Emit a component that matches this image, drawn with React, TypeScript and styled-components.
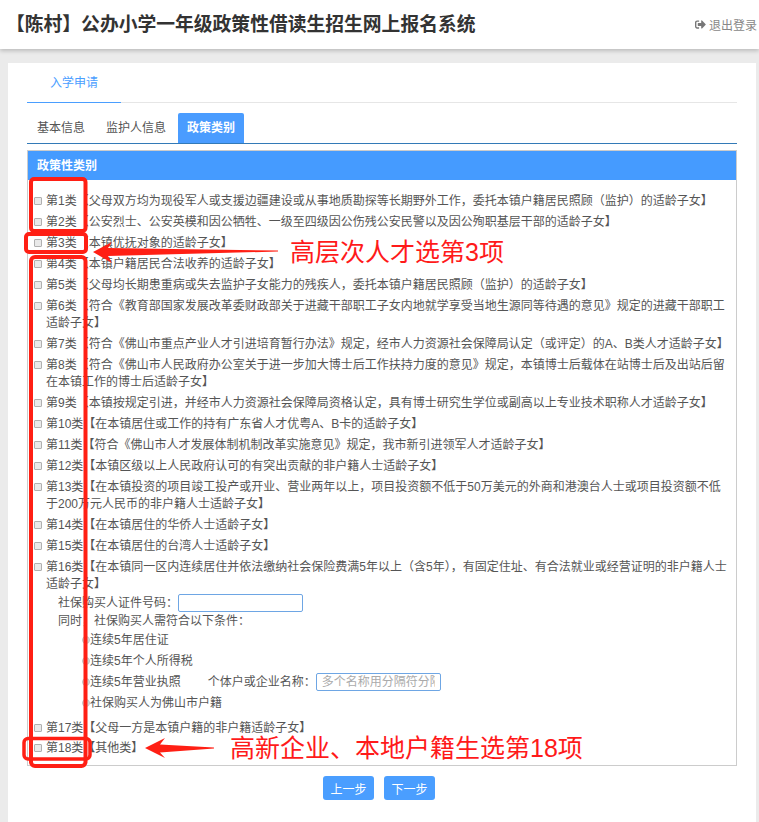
import React from "react";
import styled, { createGlobalStyle } from "styled-components";
import { FaSignOutAlt } from "react-icons/fa";

const Global = createGlobalStyle`
  html, body { margin: 0; padding: 0; background: #ebebeb; }
  body { font-family: "Liberation Sans", "Noto Sans CJK SC", sans-serif; font-size: 12px; color: #555; }
  * { box-sizing: border-box; }
`;
const Page = styled.div`
  position: relative;
  width: 759px;
  height: 822px;
  overflow: hidden;
`;
const Header = styled.header`
  height: 49px;
  background: #fff;
  box-shadow: 0 2px 4px rgba(0, 0, 0, 0.2);
  display: flex;
  align-items: center;
  justify-content: space-between;
  padding: 0 2px 0 6px;
`;
const Title = styled.h1`
  margin: 0;
  font-size: 18.8px;
  font-weight: 700;
  color: #333;
  line-height: 49px;
`;
const Logout = styled.a`
  display: flex;
  align-items: center;
  gap: 3px;
  color: #888;
  font-size: 12px;
  margin-bottom: 1px;
  svg { color: #777; }
`;
const Main = styled.main`
  padding: 14px 3px 0 8px;
`;
const Card = styled.section`
  background: #fff;
  height: 759px;
  padding: 0 19px;
`;
const TopTabs = styled.div`
  height: 40px;
  border-bottom: 1px solid #e6e6e6;
  display: flex;
`;
const TopTab = styled.div`
  width: 94px;
  height: 40px;
  padding-left: 23px;
  line-height: 41px;
  color: #4a9eff;
  border-bottom: 1px solid #4a9eff;
`;
const SubTabs = styled.div`
  margin-top: 10px;
  height: 31px;
  border-bottom: 1px solid #337ab7;
  display: flex;
`;
const SubTab = styled.div<{ $active?: boolean }>`
  height: 30px;
  padding: ${(p) => (p.$active ? "0 9px 0 9px" : "0 10px")};
  line-height: 31px;
  margin: ${(p) => (p.$active ? "0 0 0 1px" : "0 1px 0 0")};
  border-radius: 2px 2px 0 0;
  color: ${(p) => (p.$active ? "#fff" : "#555")};
  background: ${(p) => (p.$active ? "#4a9cff" : "transparent")};
  font-weight: ${(p) => (p.$active ? 700 : 400)};
`;
const Panel = styled.div`
  margin-top: 6px;
  height: 616px;
  border: 1px solid #ccc;
`;
const PanelHead = styled.div`
  height: 29px;
  background: #459bff;
  color: #fff;
  font-weight: 700;
  padding-left: 9px;
  line-height: 30px;
`;
const PanelBody = styled.div`
  padding: 13px 4px 0 6px;
`;
const Row = styled.label<{ $tight?: boolean; $last?: boolean }>`
  display: flex;
  align-items: flex-start;
  line-height: 17px;
  margin-bottom: ${(p) => (p.$tight ? "1px" : p.$last ? "3px" : "4px")};
`;
const Check = styled.input.attrs({ type: "checkbox" })`
  appearance: none;
  flex: none;
  width: 8px;
  height: 8px;
  margin: 4px 4px 0 0;
  border: 1px solid #b0b0b0;
  border-radius: 1px;
  background: #e9e9e9;
`;
const Sub = styled.div`
  padding-left: 24px;
  margin-bottom: 8px;
  line-height: 18px;
`;
const SubLine = styled.div<{ $gap?: number }>`
  display: flex;
  align-items: center;
  height: 18px;
  margin-bottom: ${(p) => p.$gap ?? 0}px;
`;
const Cond = styled.label`
  display: flex;
  align-items: center;
  height: 18px;
  margin: 0 0 3px 24px;
  white-space: nowrap;
`;
const Radio = styled.input.attrs({ type: "radio" })`
  appearance: none;
  flex: none;
  width: 8px;
  height: 8px;
  margin: 0;
  border-radius: 50%;
  background: #d9d9d9;
  border: 1px solid #c4c4c4;
`;
const TextInput = styled.input`
  width: 125px;
  height: 18px;
  padding: 0 5px;
  border: 1px solid #6ea6e4;
  border-radius: 2px;
  font: inherit;
  font-size: 12px;
  background: #fff;
  outline: none;
  &::placeholder { color: #aaa; }
`;
const CompanyLabel = styled.span`
  margin-left: 17px;
`;
const Footer = styled.div`
  margin-top: 10px;
  display: flex;
  justify-content: center;
  gap: 10px;
  padding-right: 6px;
`;
const Btn = styled.button`
  width: 51px;
  height: 24px;
  border: 0;
  border-radius: 3px;
  background: #4a9eff;
  color: #fff;
  font: inherit;
  font-size: 12px;
  padding: 0;
`;
const Overlay = styled.svg`
  position: absolute;
  left: 0;
  top: 0;
  pointer-events: none;
`;
const Note = styled.span<{ $x: number; $y: number }>`
  position: absolute;
  left: ${(p) => p.$x}px;
  top: ${(p) => p.$y}px;
  font-size: 25px;
  line-height: 30px;
  color: #ff1a1a;
  white-space: nowrap;
`;

const head: [string, string][] = [
  ["第1类", "【父母双方均为现役军人或支援边疆建设或从事地质勘探等长期野外工作，委托本镇户籍居民照顾（监护）的适龄子女】"],
  ["第2类", "【公安烈士、公安英模和因公牺牲、一级至四级因公伤残公安民警以及因公殉职基层干部的适龄子女】"],
  ["第3类", "【本镇优抚对象的适龄子女】"],
  ["第4类", "【本镇户籍居民合法收养的适龄子女】"],
  ["第5类", "【父母均长期患重病或失去监护子女能力的残疾人，委托本镇户籍居民照顾（监护）的适龄子女】"],
  ["第6类", "【符合《教育部国家发展改革委财政部关于进藏干部职工子女内地就学享受当地生源同等待遇的意见》规定的进藏干部职工适龄子女】"],
  ["第7类", "【符合《佛山市重点产业人才引进培育暂行办法》规定，经市人力资源社会保障局认定（或评定）的A、B类人才适龄子女】"],
  ["第8类", "【符合《佛山市人民政府办公室关于进一步加大博士后工作扶持力度的意见》规定，本镇博士后载体在站博士后及出站后留在本镇工作的博士后适龄子女】"],
  ["第9类", "【本镇按规定引进，并经市人力资源社会保障局资格认定，具有博士研究生学位或副高以上专业技术职称人才适龄子女】"],
  ["第10类", "【在本镇居住或工作的持有广东省人才优粤A、B卡的适龄子女】"],
  ["第11类", "【符合《佛山市人才发展体制机制改革实施意见》规定，我市新引进领军人才适龄子女】"],
  ["第12类", "【本镇区级以上人民政府认可的有突出贡献的非户籍人士适龄子女】"],
  ["第13类", "【在本镇投资的项目竣工投产或开业、营业两年以上，项目投资额不低于50万美元的外商和港澳台人士或项目投资额不低于200万元人民币的非户籍人士适龄子女】"],
  ["第14类", "【在本镇居住的华侨人士适龄子女】"],
  ["第15类", "【在本镇居住的台湾人士适龄子女】"],
];

export default function App() {
  return (
    <Page>
      <Global />
      <Header>
        <Title>【陈村】公办小学一年级政策性借读生招生网上报名系统</Title>
        <Logout>
          <FaSignOutAlt size={11} />
          退出登录
        </Logout>
      </Header>
      <Main>
        <Card>
          <TopTabs>
            <TopTab>入学申请</TopTab>
          </TopTabs>
          <SubTabs>
            <SubTab>基本信息</SubTab>
            <SubTab>监护人信息</SubTab>
            <SubTab $active>政策类别</SubTab>
          </SubTabs>
          <Panel>
            <PanelHead>政策性类别</PanelHead>
            <PanelBody>
              {head.map(([k, t]) => (
                <Row key={k}>
                  <Check />
                  <span>{k}{t}</span>
                </Row>
              ))}
              <Row $tight>
                <Check />
                <span>第16类【在本镇同一区内连续居住并依法缴纳社会保险费满5年以上（含5年），有固定住址、有合法就业或经营证明的非户籍人士适龄子女】</span>
              </Row>
              <Sub>
                <SubLine>
                  社保购买人证件号码：
                  <TextInput />
                </SubLine>
                <SubLine $gap={1}>同时，社保购买人需符合以下条件：</SubLine>
                <Cond><Radio name="c1" />连续5年居住证</Cond>
                <Cond><Radio name="c2" />连续5年个人所得税</Cond>
                <Cond>
                  <Radio name="c3" />连续5年营业执照
                  <CompanyLabel>&nbsp;&nbsp;&nbsp;个体户或企业名称：</CompanyLabel>
                  <TextInput placeholder="多个名称用分隔符分隔" />
                </Cond>
                <Cond><Radio name="c4" />社保购买人为佛山市户籍</Cond>
              </Sub>
              <Row $last>
                <Check />
                <span>第17类【父母一方是本镇户籍的非户籍适龄子女】</span>
              </Row>
              <Row>
                <Check />
                <span>第18类【其他类】</span>
              </Row>
            </PanelBody>
          </Panel>
          <Footer>
            <Btn>上一步</Btn>
            <Btn>下一步</Btn>
          </Footer>
        </Card>
      </Main>
      <Overlay width="759" height="822" viewBox="0 0 759 822">
        <g fill="none" stroke="#ff1f14" strokeWidth="4">
          <rect x="31" y="179" width="54.500" height="52" rx="3" />
          <rect x="26" y="234" width="60" height="18" rx="3" />
          <rect x="31" y="257" width="54.500" height="509" rx="4" />
          <rect x="24" y="738.500" width="66" height="20.500" rx="4" strokeWidth="3.500" />
        </g>
        <g fill="#ff1f14">
          <polygon points="93,252 112,242 108,248 278,250.500 278,251.500 108,256 112,263" />
          <polygon points="145,748 165,738 160,744.500 214,747.500 214,748.500 160,752.500 165,758" />
        </g>
      </Overlay>
      <Note $x={290} $y={237}>高层次人才选第3项</Note>
      <Note $x={230} $y={733}>高新企业、本地户籍生选第18项</Note>
    </Page>
  );
}
